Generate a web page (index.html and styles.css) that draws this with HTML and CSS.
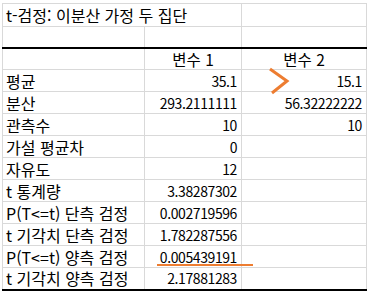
FILE: index.html
```html
<!DOCTYPE html>
<html lang="ko">
<head>
<meta charset="utf-8">
<link rel="stylesheet" href="styles.css">
</head>
<body>
<div class="sheet">
  <table class="grid">
    <colgroup><col class="c-a"><col class="c-b"><col class="c-c"></colgroup>
    <tr class="r-title"><td class="title" colspan="2">t-검정: 이분산 가정 두 집단</td><td></td></tr>
    <tr class="r-empty"><td></td><td></td><td></td></tr>
    <tr class="r-head"><td></td><td class="ctr">변수 1</td><td class="ctr">변수 2</td></tr>
    <tr><td class="lbl">평균</td><td class="num">35.1</td><td class="num">15.1</td></tr>
    <tr><td class="lbl">분산</td><td class="num">293.2111111</td><td class="num">56.32222222</td></tr>
    <tr><td class="lbl">관측수</td><td class="num">10</td><td class="num">10</td></tr>
    <tr><td class="lbl">가설 평균차</td><td class="num">0</td><td></td></tr>
    <tr><td class="lbl">자유도</td><td class="num">12</td><td></td></tr>
    <tr><td class="lbl">t 통계량</td><td class="num">3.38287302</td><td></td></tr>
    <tr><td class="lbl">P(T&lt;=t) 단측 검정</td><td class="num">0.002719596</td><td></td></tr>
    <tr><td class="lbl">t 기각치 단측 검정</td><td class="num">1.782287556</td><td></td></tr>
    <tr><td class="lbl">P(T&lt;=t) 양측 검정</td><td class="num">0.005439191</td><td></td></tr>
    <tr class="r-last"><td class="lbl">t 기각치 양측 검정</td><td class="num">2.17881283</td><td></td></tr>
  </table>
  <svg class="chevron" width="26" height="30" viewBox="0 0 26 30"><polyline points="4,3 21,15 6,27" fill="none" stroke="#ED7D31" stroke-width="3"/></svg>
  <div class="mark"></div>
</div>
</body>
</html>
```
FILE: styles.css
```css
html, body { margin: 0; padding: 0; background: #fff; }
body { width: 369px; height: 294px; overflow: hidden; }
.sheet { position: relative; padding: 3px 0 0 2px; }
.grid {
  border-collapse: collapse;
  table-layout: fixed;
  width: 364px;
  font-family: "Noto Sans CJK KR", "Malgun Gothic", sans-serif;
  font-size: 15px;
  color: #000;
}
.c-a { width: 142px; }
.c-b { width: 97px; }
.c-c { width: 125px; }
.grid tr { height: 22px; }
.grid td {
  border: 1px solid #d9d9d9;
  box-sizing: border-box;
  height: 22px;
  padding: 0;
  white-space: nowrap;
  overflow: visible;
  line-height: 16px;
}
.grid .r-title { height: 23px; }
.grid .r-title td { height: 23px; font-size: 16px; }
.grid .r-empty { height: 21px; }
.grid .r-empty td { height: 21px; border-bottom: 2px solid #000; }
.grid .r-last td { border-bottom: 2px solid #000; }
.title { padding-left: 3px !important; }
.lbl { padding-left: 3px !important; font-size: 16px; }
.num { text-align: right; padding-right: 4px !important; font-size: 14px; letter-spacing: -0.4px; }
.ctr { text-align: center; font-size: 15.5px; }
.chevron { position: absolute; left: 266px; top: 66px; }
.mark { position: absolute; left: 157px; top: 264px; width: 96px; height: 2px; background: #ED7D31; }
```
